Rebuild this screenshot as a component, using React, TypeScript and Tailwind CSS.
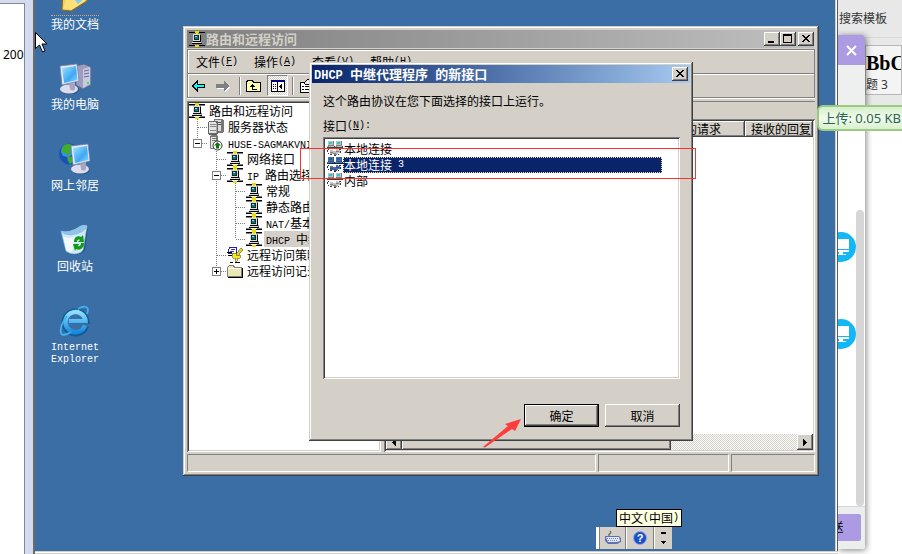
import type { ReactNode } from "react";
import clsx from "clsx";

const raised =
  "bg-[#d4d0c8] shadow-[inset_-1px_-1px_#404040,inset_1px_1px_#fff,inset_-2px_-2px_#808080]";
const frame =
  "bg-[#d4d0c8] shadow-[inset_-1px_-1px_#404040,inset_1px_1px_#d4d0c8,inset_-2px_-2px_#808080,inset_2px_2px_#fff]";
const sunken =
  "bg-white p-[2px] shadow-[inset_1px_1px_#808080,inset_-1px_-1px_#fff,inset_2px_2px_#404040,inset_-2px_-2px_#d4d0c8]";
const hatch =
  "bg-[conic-gradient(#fff_25%,#d4d0c8_0_50%,#fff_0_75%,#d4d0c8_0)] bg-[length:2px_2px]";

// half-width text, 6px per character
function En({ children }: { children: ReactNode }) {
  return (
    <span className="font-['Liberation_Mono',monospace] text-[10px] leading-none whitespace-pre">{children}</span>
  );
}

function Key({ k }: { k: string }) {
  return (
    <En>
      (<span className="underline">{k}</span>)
    </En>
  );
}

/* ---------- icons ---------- */

function RouterIcon() {
  return (
    <svg width="16" height="16" viewBox="0 0 16 16" shapeRendering="crispEdges" className="shrink-0">
      <path d="M0 1h16v1H0zM0 14h16v1H0z" fill="#000" />
      <path d="M0 2h6v1H0zM10 2h6v1h-6zM0 13h5v1H0zM11 13h5v1h-5z" fill="#808080" />
      <path d="M6 0h4v2H6zM7 2h2v1H7zM6 14h4v2H6z" fill="#e8e000" />
      <path d="M4 3h8v7h1v3H3v-2h1z" fill="#808080" />
      <path d="M4 3h7v7H4zM3 11h9v1H3z" fill="#dcdcdc" />
      <path d="M5 4h5v5H5z" fill="#222" />
      <path d="M6 5h3v3H6z" fill="#008080" />
      <path d="M6 5h2v1H6z" fill="#5ff" />
      <path d="M11 4h1v7h-1zM3 12h10v1H3zM4 10h8v1H4z" fill="#000" />
    </svg>
  );
}

function ServersIcon() {
  return (
    <svg width="16" height="16" viewBox="0 0 16 16" shapeRendering="crispEdges" className="shrink-0">
      <path d="M6 0h8l2 2v10l-2 2H7z" fill="#777" />
      <path d="M7 1h6v11H7z" fill="#ddd" />
      <path d="M8 3h5v1H8zM8 5h5v1H8z" fill="#555" />
      <path d="M0 3l2-1h7l1 1v11l-2 2H1l-1-1z" fill="#666" />
      <path d="M1 3h7v11H1z" fill="#e4e4e4" />
      <path d="M2 5h6v1H2zM2 7h6v1H2zM2 11h6v1H2z" fill="#888" />
      <path d="M8 4h1v10H8z" fill="#aaa" />
    </svg>
  );
}

function ServerUpIcon() {
  return (
    <svg width="16" height="16" viewBox="0 0 16 16" className="shrink-0">
      <path d="M2 1l2-1h5l1 1v11l-2 2H3l-1-1z" fill="#777" />
      <path d="M3 2h5v11H3z" fill="#e6e6e6" />
      <path d="M4 3.500h4M4 5.500h4" stroke="#777" />
      <circle cx="9.500" cy="10.500" r="4.500" fill="#fff" stroke="#333" />
      <path d="M9.500 7l3.500 3.500h-2v3H8v-3H6z" fill="#087a08" />
    </svg>
  );
}

function PolicyIcon() {
  return (
    <svg width="16" height="16" viewBox="0 0 16 16" shapeRendering="crispEdges" className="shrink-0">
      <path d="M3 0h6v6H1V4z" fill="#fff" stroke="#22a" />
      <path d="M4 2h4M3 4h4" stroke="#33c" />
      <path d="M0 5h5v1H0zM1 8h5v1H1zM3 15h3v1H3zM8 15h5v1H8z" fill="#000" />
      <path d="M14 1l2 2-6 7-2-2z" fill="#e8d820" stroke="#554" strokeWidth="0.600" />
      <path d="M5 6h4v2h4v3h-3v3H8v-3H6z" fill="#ffe81c" stroke="#554" strokeWidth="0.600" />
    </svg>
  );
}

function FolderIcon() {
  return (
    <svg width="16" height="16" viewBox="0 0 16 16" shapeRendering="crispEdges" className="shrink-0">
      <path d="M.500 4.500l2-2h4l1 2h7v9h-14z" fill="#ece8b4" stroke="#808080" />
      <path d="M1 5.500h13" stroke="#fff" />
      <path d="M15.500 5v9.500H1" fill="none" stroke="#000" />
    </svg>
  );
}

function LinkIcon({ selected }: { selected?: boolean }) {
  const body = selected ? "#566a98" : "#c0c0c0";
  const glass = selected ? "#0b6a9c" : "#20d0d0";
  const edge = selected ? "#0a246a" : "#404040";
  const mid = selected ? "#34508c" : "#808080";
  return (
    <svg width="16" height="16" viewBox="0 0 16 16" shapeRendering="crispEdges" className="shrink-0">
      <path d="M1 0h5v4H1zM9 0h5v4H9zM0 5h7v1H0zM8 5h7v1H8z" fill={body} />
      <path d="M2 1h3v2H2zM10 1h3v2h-3z" fill={glass} />
      <path d="M6 0h1v4H6zM14 0h1v4h-1zM1 4h6v1H1zM9 4h6v1H9z" fill={mid} />
      <path d="M0 6h7v1H0zM8 6h7v1H8zM7 5h1v2H7zM15 5h1v2h-1z" fill={edge} />
      <path d="M1 5h1v1H1zM9 5h1v1H9z" fill="#20d020" />
      <path d="M3 9h3v1h3V8h2v1h2v3h-2v1H9v-1H6v1H3z" fill={body} />
      <path d="M3 11h3v1H3zM6 12h3v1H6zM7 13h3v1H7zM9 10h3v1H9z" fill={mid} />
      <path d="M1 8h1v1H1zM0 9h1v2H0zM1 12h1v1H1zM3 13h2v1H3zM12 8h2v1h-2zM13 10h1v2h-1zM11 13h1v1h-1zM7 14h2v1H7z" fill={edge} />
    </svg>
  );
}

function DocsIcon() {
  return (
    <svg width="32" height="32" viewBox="0 0 32 32" className="shrink-0">
      <path d="M4 9l13-7 10 5 1 13-16 10-9-1z" fill="#f6cf4e" stroke="#8c6a12" />
      <path d="M8 14l17-8 3 3-2 11-14 9-8-1z" fill="#fde07a" />
      <path d="M15 18l5-4 5 4-6 5z" fill="#8bc9f2" />
    </svg>
  );
}

function Monitor({ x, y }: { x: number; y: number }) {
  return (
    <g transform={`translate(${x} ${y})`}>
      <ellipse cx="10" cy="26" rx="9" ry="4.500" fill="#1f3f68" opacity="0.500" />
      <ellipse cx="9" cy="25" rx="9" ry="4.500" fill="#dcdcec" />
      <path d="M9 18l6-1v8c-1 2-4 2-5 0z" fill="#a6a6c4" />
      <path d="M0 2L17 0l2 17L2 21z" fill="#e9e9f6" stroke="#6f7fa4" strokeWidth="0.700" />
      <path d="M2 4l14-2 1.500 14L4 19z" fill="url(#glass)" />
    </g>
  );
}

function ComputerIcon() {
  return (
    <svg width="32" height="32" viewBox="0 0 32 32" className="shrink-0">
      <defs>
        <linearGradient id="glass" x1="0" y1="0" x2="1" y2="1">
          <stop offset="0" stopColor="#9fe6ff" />
          <stop offset="0.600" stopColor="#3fa8f4" />
          <stop offset="1" stopColor="#8adcff" />
        </linearGradient>
      </defs>
      <path d="M17 4l8-2 7 3v18l-8 4-7-4z" fill="#9d9dc0" stroke="#555f8c" strokeWidth="0.700" />
      <path d="M24 7l7-2v17l-7 4z" fill="#c9c9e4" />
      <path d="M25 9l5-1M25 12l5-1M25 15l5-1" stroke="#6c6c98" />
      <path d="M28 20h2v2h-2z" fill="#39e539" />
      <Monitor x={1} y={2} />
    </svg>
  );
}

function NetworkIcon() {
  return (
    <svg width="32" height="32" viewBox="0 0 32 32" className="shrink-0">
      <circle cx="10.500" cy="11" r="10.500" fill="#1653b8" />
      <circle cx="8" cy="8" r="6" fill="#3f8ce6" />
      <path d="M4 3c4-3 9-2 10 0l-3 3 1 4-4 2-3-3-3 1zM8 13l5 1 2 4-4 3-2-3z" fill="#3fae2c" />
      <Monitor x={12} y={1} />
    </svg>
  );
}

function RecycleIcon() {
  return (
    <svg width="32" height="32" viewBox="0 0 32 32" className="shrink-0">
      <path d="M29 4l-3 22c-3 5-12 6-18 3l2-3z" fill="#16345c" opacity="0.450" />
      <path d="M2 7c5 2 12 0 18-4 3-2 6-2 8-1l-4 24c-3 5-13 5-17 1z" fill="#cfeaf8" stroke="#86b9dc" strokeWidth="0.700" />
      <path d="M2 7c5 2 12 0 18-4 3-2 6-2 8-1-1 5-7 8-14 9-5 1-10 0-12-4z" fill="#8fc3ea" />
      <path d="M4 12c5 3 9 2 12 0l-3 16c-3 0-5-1-6-2z" fill="#fff" opacity="0.700" />
      <path d="M15 18c0-5 4-7 7-5l2-2 1 7h-6l2-2c-2-1-3 0-3 2zM25 19c0 5-4 8-8 6l-1 2-2-7h6l-1 2c2 1 3-1 3-3z" fill="#129a12" />
    </svg>
  );
}

function ExplorerIcon() {
  return (
    <svg width="32" height="32" viewBox="0 0 32 32" className="shrink-0">
      <defs>
        <linearGradient id="ie" x1="0" y1="0" x2="0" y2="1">
          <stop offset="0" stopColor="#8fe0ff" />
          <stop offset="1" stopColor="#1789da" />
        </linearGradient>
      </defs>
      <path d="M27 21a11 11 0 1 1 .500-5H11" fill="none" stroke="#155b98" strokeWidth="6" />
      <path d="M26 20.500a10 10 0 1 1 .500-4.500H10" fill="none" stroke="url(#ie)" strokeWidth="4.500" />
      <path
        d="M19 4c7-4 12-3 9 5M8 11C1 20 0 29 4 30c2 0 5-1 8-3"
        fill="none"
        stroke="#3fb2f0"
        strokeWidth="1.800"
      />
    </svg>
  );
}

/* ---------- desktop ---------- */

const shortcuts = [
  { label: "我的文档", icon: <DocsIcon /> },
  { label: "我的电脑", icon: <ComputerIcon /> },
  { label: "网上邻居", icon: <NetworkIcon /> },
  { label: "回收站", icon: <RecycleIcon /> },
  {
    label: (
      <span className="flex flex-col gap-[2px] pt-1">
        <En>Internet</En>
        <En>Explorer</En>
      </span>
    ),
    icon: <ExplorerIcon />,
  },
];

function CaptionButton({ label, children }: { label: string; children: ReactNode }) {
  return (
    <button aria-label={label} className={clsx("flex h-[14px] w-4 items-center justify-center", raised)}>
      <svg width="16" height="14" viewBox="0 0 16 14" shapeRendering="crispEdges">
        {children}
      </svg>
    </button>
  );
}

const cross = <path d="M4 3h2v1h1v1h2V4h1V3h2v1h-1v1h-1v1H9v1h1v1h1v1h1v1h-2V9H9V8H7v1H6v1H4V9h1V8h1V7h1V6H6V5H5V4H4z" />;

type Node = {
  level: number;
  label: ReactNode;
  icon: ReactNode;
  box?: "+" | "-";
  selected?: boolean;
};

const nodes: Node[] = [
  { level: 0, label: "路由和远程访问", icon: <RouterIcon /> },
  { level: 1, label: "服务器状态", icon: <ServersIcon /> },
  { level: 1, label: <En>HUSE-SAGMAKVNI</En>, icon: <ServerUpIcon />, box: "-" },
  { level: 2, label: "网络接口", icon: <RouterIcon /> },
  { level: 2, label: <><En>IP </En>路由选择</>, icon: <RouterIcon />, box: "-" },
  { level: 3, label: "常规", icon: <RouterIcon /> },
  { level: 3, label: "静态路由", icon: <RouterIcon /> },
  { level: 3, label: <><En>NAT/</En>基本防火墙</>, icon: <RouterIcon /> },
  { level: 3, label: <><En>DHCP </En>中继代理程序</>, icon: <RouterIcon />, selected: true },
  { level: 2, label: "远程访问策略", icon: <PolicyIcon /> },
  { level: 2, label: "远程访问记录", icon: <FolderIcon />, box: "+" },
];

// Dotted guides for one row; each level is a 19px column.
function Guides({ index }: { index: number }) {
  const { level, box } = nodes[index];
  const cells = [];
  for (let l = 1; l <= level; l++) {
    const rest = nodes.slice(index + 1);
    const stop = rest.findIndex((n) => n.level < l);
    const continues = (stop < 0 ? rest : rest.slice(0, stop)).some((n) => n.level === l);
    const own = l === level;
    cells.push(
      <svg key={l} width="19" height="16" viewBox="0 0 19 16" shapeRendering="crispEdges" className="shrink-0">
        {(own || continues) && (
          <path d={continues ? "M8.500 0v16" : "M8.500 0v8"} stroke="#808080" strokeDasharray="1 1" />
        )}
        {own && <path d="M9 8.500h10" stroke="#808080" strokeDasharray="1 1" />}
        {own && box && (
          <>
            <path d="M4.500 4.500h8v8h-8z" fill="#fff" stroke="#808080" />
            <path d={box === "+" ? "M6 8.500h5M8.500 6v5" : "M6 8.500h5"} stroke="#000" />
          </>
        )}
      </svg>,
    );
  }
  return <>{cells}</>;
}

function Tree() {
  return (
    <ul className={clsx("w-[194px] shrink-0 overflow-hidden", sunken)}>
      {nodes.map((n, i) => (
        <li key={i} className="flex h-4 items-center leading-4 whitespace-nowrap">
          <Guides index={i} />
          {n.icon}
          <span className={clsx("ml-[2px] px-[2px]", n.selected && "bg-[#d4d0c8]")}>{n.label}</span>
        </li>
      ))}
    </ul>
  );
}

function Separator() {
  return <span className="mx-1 h-[18px] w-[2px] border-l border-[#808080] bg-white" />;
}

function Toolbar() {
  return (
    <div className="-mt-px flex h-[25px] items-center border border-[#808080] pl-[3px] shadow-[inset_1px_1px_#fff,0_1px_#fff]">
      <button aria-label="后退" className="flex w-6 items-center">
        <svg width="16" height="12" viewBox="0 0 16 12" shapeRendering="crispEdges">
          <path d="M1.500 6L6 1.500V4.500h7.500v3H6v3z" fill="#0ff" stroke="#000" />
        </svg>
      </button>
      <button aria-label="前进" className="flex w-5 items-center">
        <svg width="16" height="12" viewBox="0 0 16 12" shapeRendering="crispEdges">
          <path d="M15 7l-5 5V9H2V8h9z" fill="#fff" />
          <path d="M14 6L9 1v3H1v4h8v3z" fill="#808080" />
        </svg>
      </button>
      <Separator />
      <button aria-label="向上" className="flex w-[22px] items-center">
        <svg width="17" height="16" viewBox="0 0 17 16" shapeRendering="crispEdges">
          <path d="M1.500 4.500l1-2h5l1 2h7v9h-14z" fill="#ffffb0" stroke="#000" />
          <path d="M7 6h1v1h1v1h1v1H8v2h4v1H7V9H5V8h1V7h1z" />
        </svg>
      </button>
      <button
        aria-label="显示控制台树"
        aria-pressed
        className={clsx(
          "flex size-[21px] items-center justify-center border border-t-[#808080] border-r-white border-b-white border-l-[#808080]",
          hatch,
        )}
      >
        <svg width="14" height="12" viewBox="0 0 14 12" shapeRendering="crispEdges">
          <path d="M0 0h14v12H0z" fill="#000" />
          <path d="M1 2h5v9H1zM7 2h6v9H7z" fill="#fff" />
          <path d="M0 0h14v2H0z" fill="#000080" />
          <path d="M2 4h1v1H2zM4 4h1v1H4zM2 6h1v1H2zM4 6h1v1H4zM2 8h1v1H2zM4 8h1v1H4z" fill="#008" />
          <path d="M11 3v7L8 6.500z" fill="#000" />
        </svg>
      </button>
      <Separator />
      <button aria-label="属性" className="ml-[2px]">
        <svg width="16" height="16" viewBox="0 0 16 16" shapeRendering="crispEdges">
          <path d="M.500 4.500h12v10H.500z" fill="#fff" stroke="#000" />
          <path d="M2 8h2v1H2zM5 8h6v1H5zM2 11h2v1H2zM5 11h6v1H5z" fill="#000" />
          <path d="M4 5l4-4 3 1 3 3-4 3-2-2-2 1z" fill="#eee" stroke="#000" />
        </svg>
      </button>
    </div>
  );
}

const columns = ["接口", "中继模式", "接收的请求", "接收的回复"];

function DetailPane() {
  return (
    <div className="ml-[3px] flex min-w-0 flex-1 flex-col">
      <div className="h-[18px] border-t border-[#808080]" />
      <div className={clsx("flex flex-1 flex-col", sunken)}>
        <table className="w-full table-fixed border-collapse">
          <colgroup>
            <col />
            <col />
            <col className="w-[90px]" />
            <col className="w-[68px]" />
          </colgroup>
          <thead>
            <tr className="h-4">
              {columns.map((c) => (
                <th key={c} className={clsx("p-0 pl-[6px] text-left leading-4 font-normal whitespace-nowrap", raised)}>
                  {c}
                </th>
              ))}
            </tr>
          </thead>
        </table>
        <div className="flex-1" />
        <div className={clsx("flex h-4", hatch)}>
          <button aria-label="向左滚动" className={clsx("flex w-4 items-center justify-center", raised)}>
            <svg width="4" height="7" viewBox="0 0 4 7" shapeRendering="crispEdges">
              <path d="M4 0v7L0 3.500z" />
            </svg>
          </button>
          <div className={clsx("w-[269px]", raised)} />
          <button aria-label="向右滚动" className={clsx("ml-auto flex w-4 items-center justify-center", raised)}>
            <svg width="4" height="7" viewBox="0 0 4 7" shapeRendering="crispEdges">
              <path d="M0 0v7l4-3.500z" />
            </svg>
          </button>
        </div>
      </div>
    </div>
  );
}

const menus = [
  { label: "文件", k: "F" },
  { label: "操作", k: "A" },
  { label: "查看", k: "V" },
  { label: "帮助", k: "H" },
];

function ConsoleWindow() {
  const cell = "border border-t-[#808080] border-r-white border-b-white border-l-[#808080]";
  return (
    <section className={clsx("absolute top-[26px] left-[148px] flex h-[450px] w-[636px] flex-col p-1", frame)}>
      <header className="mr-px flex h-[18px] shrink-0 items-center bg-linear-to-r from-[#808080] to-[#c0c0c0] pl-[2px]">
        <RouterIcon />
        <h1 className="ml-px flex-1 text-[13px] leading-[18px] font-bold text-[#d4d0c8]">路由和远程访问</h1>
        <div className="flex">
          <CaptionButton label="最小化">
            <path d="M4 9h6v2H4z" />
          </CaptionButton>
          <CaptionButton label="最大化">
            <path d="M3 2h9v9H3zM4 4v6h7V4z" fillRule="evenodd" />
          </CaptionButton>
        </div>
        <div className="ml-[2px] flex">
          <CaptionButton label="关闭">{cross}</CaptionButton>
        </div>
      </header>
      <nav className="mt-px flex h-[25px] shrink-0 items-center gap-[17px] border border-[#808080] pl-2 shadow-[inset_1px_1px_#fff]">
        {menus.map((m) => (
          <button key={m.k} className="flex w-[41px] items-center leading-4 whitespace-nowrap">
            {m.label}
            <Key k={m.k} />
          </button>
        ))}
      </nav>
      <div className="shrink-0">
        <Toolbar />
      </div>
      <div className="mt-[3px] flex min-h-0 flex-1">
        <Tree />
        <DetailPane />
      </div>
      <footer className="mt-[2px] flex h-[18px] shrink-0 gap-[2px]">
        <div className={clsx("flex-1", cell)} />
        <div className={clsx("w-[131px]", cell)} />
        <div className={clsx("w-[84px]", cell)} />
      </footer>
    </section>
  );
}

const interfaces = [
  { name: "本地连接", suffix: "", selected: false },
  { name: "本地连接", suffix: " 3", selected: true },
  { name: "内部", suffix: "", selected: false },
];

function NewInterfaceDialog() {
  return (
    <section
      role="dialog"
      aria-labelledby="dialog-title"
      className={clsx("absolute top-[62px] left-[274px] flex h-[379px] w-[384px] flex-col p-[3px]", frame)}
    >
      <header className="flex h-[18px] shrink-0 items-center justify-between bg-linear-to-r from-[#0a246a] to-[#a6caf0] px-[2px]">
        <h2 id="dialog-title" className="text-[13px] leading-[18px] font-bold whitespace-nowrap text-white">
          <span className="font-['Liberation_Mono',monospace] text-xs">DHCP </span>
          中继代理程序
          <span className="font-['Liberation_Mono',monospace] text-xs"> </span>
          的新接口
        </h2>
        <CaptionButton label="关闭">{cross}</CaptionButton>
      </header>
      <div className="flex min-h-0 flex-1 flex-col pt-[10px] pr-[10px] pb-[11px] pl-[11px]">
        <p className="leading-4">这个路由协议在您下面选择的接口上运行。</p>
        <div id="interface-label" className="mt-[9px] mb-[3px] flex h-4 items-center leading-4">
          接口
          <Key k="N" />
          <En>:</En>
        </div>
        <ul role="listbox" aria-labelledby="interface-label" className={clsx("flex-1", sunken)}>
          {interfaces.map((item, i) => (
            <li
              key={i}
              role="option"
              aria-selected={item.selected}
              className={clsx("mr-4 ml-[2px] flex h-4 leading-4", i === 0 && "mt-[2px]")}
            >
              <LinkIcon selected={item.selected} />
              <span
                className={clsx(
                  "flex h-4 items-center pl-px",
                  item.selected &&
                    "flex-1 bg-[#0a246a] text-white outline-1 -outline-offset-1 outline-dotted outline-[#f5db95]",
                )}
              >
                {item.name}
                <En>{item.suffix}</En>
              </span>
            </li>
          ))}
        </ul>
        <div className="mt-[25px] flex justify-end gap-[6px]">
          <button className="h-[23px] w-[75px] border border-black bg-[#d4d0c8] leading-4 shadow-[inset_-1px_-1px_#404040,inset_1px_1px_#fff,inset_-2px_-2px_#808080]">
            确定
          </button>
          <button className={clsx("h-[23px] w-[75px] leading-4", raised)}>取消</button>
        </div>
      </div>
    </section>
  );
}

function LanguageBar() {
  const part = "flex h-full items-center justify-center";
  return (
    <>
      <div className="absolute bottom-[2px] left-[561px] flex h-[22px] w-[76px] bg-[#d4d0c8]">
        <span className="w-1 border-r border-[#808080] bg-white" />
        <button aria-label="键盘" className={clsx("w-[26px] border-r border-[#808080]", part)}>
          <svg width="18" height="16" viewBox="0 0 18 16">
            <path d="M6 7c-4-3 3-3 0-6" fill="none" stroke="#777" strokeWidth="1.500" />
            <path d="M1 6h14l2 2v4l-4 2H4l-3-3z" fill="#6070b4" />
            <path d="M2 7h13l1 4-3 1H4z" fill="#e6e9fa" />
            <path d="M3 8.500h11M4 10.500h10" stroke="#6f7fc4" strokeDasharray="1 1" />
          </svg>
        </button>
        <button aria-label="帮助" className={clsx("w-7 border-x border-l-white border-r-[#808080]", part)}>
          <span className="flex size-[14px] items-center justify-center rounded-full border border-[#8ca8e8] bg-[#1c50c8] font-['Liberation_Sans',sans-serif] text-[11px] leading-3 font-bold text-white">
            ?
          </span>
        </button>
        <button aria-label="选项" className={clsx("flex-1 border-l border-white", part)}>
          <svg width="6" height="12" viewBox="0 0 6 12" shapeRendering="crispEdges">
            <path d="M0 0h5v2H0zM0 9h5v1H4v1H3v1H2v-1H1v-1H0z" />
          </svg>
        </button>
      </div>
      <div
        role="tooltip"
        className="absolute bottom-[24px] left-[581px] flex h-[18px] items-center border border-black bg-[#ffffe1] px-[2px] leading-4 whitespace-nowrap"
      >
        中文<En>(</En>中国<En>)</En>
      </div>
    </>
  );
}

function Desktop() {
  return (
    <main className="relative min-w-0 flex-1 overflow-hidden bg-[#3a6ea5]">
      <ul className="-mt-[19px] flex w-20 flex-col items-center gap-[33px] text-white">
        {shortcuts.map((s, i) => (
          <li key={i}>
            <a href="#" className="flex h-12 flex-col items-center gap-[2px] leading-4">
              {s.icon}
              <span className={clsx(i === 0 && "border-t border-dotted border-[#e0a070]")}>{s.label}</span>
            </a>
          </li>
        ))}
      </ul>
      <ConsoleWindow />
      <NewInterfaceDialog />
      <LanguageBar />
      {/* red markup */}
      <div className="absolute top-[148px] left-[265px] h-[31px] w-[396px] border border-[#ff3030]" />
      <svg width="40" height="32" viewBox="0 0 40 32" className="absolute top-[417px] left-[448px]">
        <path d="M0 30L25 9 22 7 38 2 32 14 29 12 2 30.500z" fill="#ff3b3b" />
      </svg>
      <svg width="13" height="21" viewBox="0 0 13 21" className="absolute top-8 left-0">
        <path d="M.500.500v16l4-3.500 3 7 2.500-1-3-7h5z" fill="#fff" stroke="#000" />
      </svg>
    </main>
  );
}

/* ---------- host applications behind the desktop ---------- */

function ChatAvatar() {
  return (
    <svg width="30" height="30" viewBox="0 0 30 30">
      <circle cx="15" cy="15" r="15" fill="#12b7f5" />
      <path d="M6 7h17v10H6zM6 18h17v2H6zM13 20h4v2h3v1h-9v-1h2z" fill="#fff" />
    </svg>
  );
}

function HostSide() {
  return (
    <aside className="relative flex w-16 shrink-0 flex-col overflow-hidden bg-white font-['Noto_Sans','Noto_Sans_CJK_SC',sans-serif] text-[#333]">
      <div className="flex h-[131px] flex-col bg-[#e8e8e8]">
        <div className="h-[38px] border-b border-[#dadada] pl-px leading-[37px] whitespace-nowrap">搜索模板</div>
        <div className="mt-[7px] ml-[27px] h-[50px] overflow-hidden border border-[#b8b8b8] bg-[#f4f4f4]">
          <div className="pt-[5px] font-['Liberation_Serif',serif] text-xl leading-6 font-bold text-black">BbC</div>
          <div className="leading-5 whitespace-pre">题 3</div>
        </div>
      </div>
      <div className="absolute top-[35px] bottom-[5px] left-0 flex w-[27px] flex-col overflow-hidden rounded-r-[3px] bg-white shadow-[1px_1px_6px_rgba(0,0,0,0.5)]">
        <button aria-label="关闭聊天" className="flex h-[30px] items-center justify-center bg-[#ac9ae3]">
          <svg width="11" height="11" viewBox="0 0 11 11">
            <path d="M1 1l9 9M10 1l-9 9" stroke="#fff" strokeWidth="2" />
          </svg>
        </button>
        <div className="h-[55px] shrink-0 bg-[#eef0f0]" />
        <div className="relative flex-1">
          <div className="-ml-3 flex flex-col gap-[57px] pt-[112px]">
            <ChatAvatar />
            <ChatAvatar />
          </div>
          <div className="absolute top-[90px] right-px bottom-0 w-2 rounded-full bg-[#d6d6d6]" />
        </div>
        <div className="h-[43px] shrink-0 border-t border-[#ccd8e4] bg-[#eceeee] pt-[7px]">
          <button className="h-[27px] w-[23px] rounded-r-[2px] bg-[#ac9ae3] text-black">
            <span className="-ml-6 block">送</span>
          </button>
        </div>
      </div>
    </aside>
  );
}

export default function App() {
  return (
    <div className="relative flex h-screen overflow-hidden bg-white font-['Noto_Sans_CJK_SC',sans-serif] text-xs text-black">
      <div className="w-[33px] shrink-0 bg-[#d6daef] pt-[3px] pr-2">
        <div className="h-full border-t border-r border-[#7f8a99] bg-white pt-[43px] pl-[3px] font-['Noto_Sans','Noto_Sans_CJK_SC',sans-serif] leading-4">
          200
        </div>
      </div>
      <div className="flex min-w-0 flex-1 flex-col border-l-2 border-[#6c6c6c] bg-[#d4d0c8]">
        <div className="flex min-h-0 flex-1">
          <Desktop />
          <div className="w-[3px] shrink-0 border-x border-l-[#d4d0c8] border-r-[#555c68] bg-white" />
        </div>
        <div className="h-[3px] border-y border-[#d4d0c8] bg-white" />
      </div>
      <HostSide />
      <div className="absolute top-[105px] right-0 h-[26px] rounded-l-md border-2 border-r-0 border-[#9bcb83] bg-linear-to-b from-[#d5efc8] via-[#f2faee] to-[#d9f1cd] pr-px pl-[3px] font-['Noto_Sans','Noto_Sans_CJK_SC',sans-serif] text-[13px] leading-[22px] whitespace-nowrap text-[#2c6650]">
        上传: 0.05 KB
      </div>
    </div>
  );
}
